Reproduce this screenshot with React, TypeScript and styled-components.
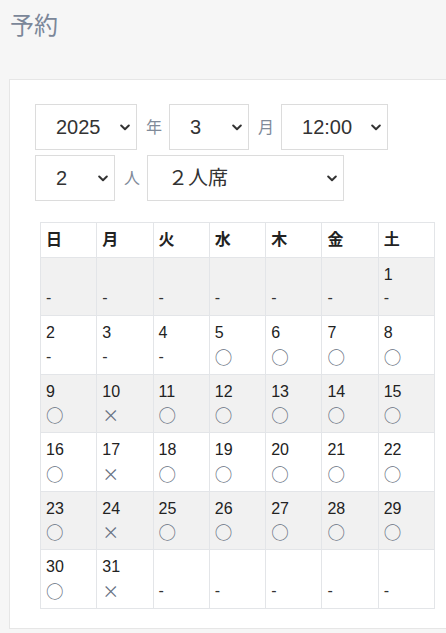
import React from "react";
import styled, { createGlobalStyle } from "styled-components";

const GlobalStyle = createGlobalStyle`
  html, body {
    margin: 0;
    padding: 0;
    background: #f6f6f6;
    overflow: hidden;
  }
  body {
    font-family: "Liberation Sans", Arial, "Noto Sans CJK JP", sans-serif;
    color: #333;
  }
`;

const Page = styled.div`
  padding: 8px 0 6px 9px;
`;

const Title = styled.h1`
  margin: 0 0 0 1px;
  font-size: 24px;
  font-weight: 400;
  line-height: 36px;
  color: #7b8799;
  font-family: "Liberation Sans", "Noto Sans CJK JP", sans-serif;
`;

const Card = styled.section`
  margin-top: 35px;
  background: #fff;
  border: 1px solid #e6e6e6;
  border-right: 0;
  padding: 24px 0 19px 25px;
`;

const Controls = styled.div`
  display: flex;
  flex-direction: column;
  gap: 5px;
`;

const ControlRow = styled.div`
  display: flex;
  align-items: center;
`;

const SelectWrap = styled.div<{ $w: number }>`
  position: relative;
  width: ${(p) => p.$w}px;
  height: 46px;
  flex: none;
`;

const Select = styled.select`
  appearance: none;
  -webkit-appearance: none;
  width: 100%;
  height: 100%;
  box-sizing: border-box;
  border: 1px solid #dcdcdc;
  border-radius: 0;
  background: #fff;
  padding: 0 0 0 20px;
  font-family: "Liberation Sans", Arial, "Noto Sans CJK JP", sans-serif;
  font-size: 20px;
  color: #333;
  outline: none;
`;

const Chevron = styled.svg`
  position: absolute;
  right: 7px;
  top: 50%;
  margin-top: -3px;
  width: 10px;
  height: 7px;
  pointer-events: none;
`;

const Unit = styled.span`
  font-family: "Noto Sans CJK JP", sans-serif;
  font-size: 16px;
  line-height: 16px;
  color: #808a99;
  margin: -3px 7px 0 9px;
`;

const Calendar = styled.table`
  margin: 21px 0 0 5px;
  width: 395px;
  border-collapse: collapse;
  table-layout: fixed;
  font-size: 16px;
  line-height: 23.5px;
`;

const HeadCell = styled.th`
  border: 1px solid #e3e5e8;
  padding: 5px;
  text-align: left;
  font-weight: 700;
  color: #222;
  font-family: "Liberation Sans", "Noto Sans CJK JP", sans-serif;
  background: #fff;
`;

const WeekRow = styled.tr`
  &:nth-child(odd) {
    background: #f1f1f1;
  }
  &:nth-child(even) {
    background: #fff;
  }
`;

const DayCell = styled.td`
  border: 1px solid #e3e5e8;
  padding: 5px;
  vertical-align: top;
  color: #222;
`;

const DayNum = styled.div`
  height: 23.5px;
`;

const Mark = styled.div<{ $kind: "ok" | "ng" | "none" }>`
  height: 24px;
  line-height: 24px;
  color: ${(p) => (p.$kind === "none" ? "#333" : "#667080")};
  font-family: ${(p) =>
    p.$kind === "none"
      ? `"Liberation Sans", Arial, sans-serif`
      : `"Noto Sans CJK JP", sans-serif`};
  font-size: ${(p) => (p.$kind === "none" ? "16px" : p.$kind === "ng" ? "17px" : "17.5px")};
`;

type Day = { n: number | null; s: "ok" | "ng" | "none" };

const ChevronIcon = () => (
  <Chevron viewBox="0 0 10 7">
    <polyline
      points="1.2,1.5 5,5.2 8.8,1.5"
      fill="none"
      stroke="#333"
      strokeWidth="2"
      strokeLinecap="round"
      strokeLinejoin="round"
    />
  </Chevron>
);

const Dropdown = ({ w, value, options }: { w: number; value: string; options: string[] }) => (
  <SelectWrap $w={w}>
    <Select defaultValue={value}>
      {options.map((o) => (
        <option key={o} value={o}>
          {o}
        </option>
      ))}
    </Select>
    <ChevronIcon />
  </SelectWrap>
);

const ngDays = new Set([10, 17, 24, 31]);
const dashDays = new Set([1, 2, 3, 4]);

function buildWeeks(): Day[][] {
  const cells: Day[] = [];
  for (let i = 0; i < 6; i++) cells.push({ n: null, s: "none" });
  for (let d = 1; d <= 31; d++) {
    cells.push({ n: d, s: dashDays.has(d) ? "none" : ngDays.has(d) ? "ng" : "ok" });
  }
  while (cells.length % 7) cells.push({ n: null, s: "none" });
  const weeks: Day[][] = [];
  for (let i = 0; i < cells.length; i += 7) weeks.push(cells.slice(i, i + 7));
  return weeks;
}

const weekdays = ["日", "月", "火", "水", "木", "金", "土"];
const symbol = { ok: "○", ng: "×", none: "-" };

export default function App() {
  const weeks = buildWeeks();
  return (
    <>
      <GlobalStyle />
      <Page>
        <Title>予約</Title>
        <Card>
          <Controls>
            <ControlRow>
              <Dropdown w={102} value="2025" options={["2025", "2026"]} />
              <Unit>年</Unit>
              <Dropdown w={80} value="3" options={["1", "2", "3", "4", "5", "6", "7", "8", "9", "10", "11", "12"]} />
              <Unit>月</Unit>
              <Dropdown w={107} value="12:00" options={["11:00", "12:00", "13:00", "18:00"]} />
            </ControlRow>
            <ControlRow>
              <Dropdown w={80} value="2" options={["1", "2", "3", "4"]} />
              <Unit>人</Unit>
              <Dropdown w={197} value="２人席" options={["２人席", "４人席", "個室"]} />
            </ControlRow>
          </Controls>
          <Calendar>
            <thead>
              <tr>
                {weekdays.map((w) => (
                  <HeadCell key={w}>{w}</HeadCell>
                ))}
              </tr>
            </thead>
            <tbody>
              {weeks.map((week, wi) => (
                <WeekRow key={wi}>
                  {week.map((d, di) => (
                    <DayCell key={di}>
                      <DayNum>{d.n ?? "\u00a0"}</DayNum>
                      <Mark $kind={d.s}>{symbol[d.s]}</Mark>
                    </DayCell>
                  ))}
                </WeekRow>
              ))}
            </tbody>
          </Calendar>
        </Card>
      </Page>
    </>
  );
}
